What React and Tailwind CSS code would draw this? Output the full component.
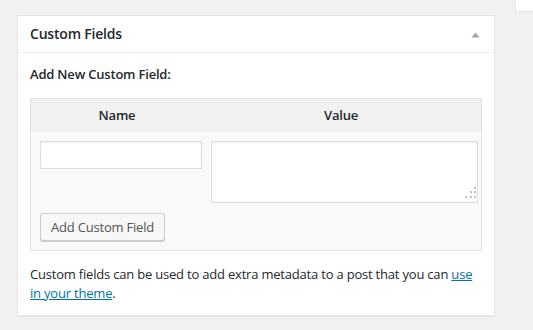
export default function App() {
  const font = { fontFamily: '"Open Sans", "Noto Sans", sans-serif' };
  return (
    <div className="flex h-[330px] w-[533px] items-start overflow-hidden bg-[#f1f1f1] tracking-[-0.2px] text-[#23282d]" style={font}>
      <div className="ml-[17px] mt-[15px] w-[478px] shrink-0 border border-[#e5e5e5] bg-white shadow-[0_1px_1px_rgba(0,0,0,0.04)]">
        <div className="flex h-[37px] items-center justify-between border-b border-[#eee] pl-3 pr-[14px]">
          <h2 className="text-[14px] font-semibold leading-none">Custom Fields</h2>
          <svg width="9" height="6" viewBox="0 0 9 6" className="mt-[1px]">
            <path d="M0.5 5.5 L4.5 0.5 L8.5 5.5 Z" fill="#a0a5aa" />
          </svg>
        </div>

        <div className="px-3 pb-3 pt-3">
          <p className="text-[13px] font-semibold leading-[19px]">Add New Custom Field:</p>

          <div className="mt-[14px] border border-[#e1e1e1] bg-[#f9f9f9]">
            <div className="flex h-[33px] items-center bg-[#f1f1f1] text-[13px] font-semibold">
              <div className="w-[172px] text-center">Name</div>
              <div className="flex-1 pr-[2px] text-center">Value</div>
            </div>
            <div className="px-[9px] pb-[9px] pt-[9px]">
              <div className="flex items-start gap-[9px]">
                <input
                  type="text"
                  className="h-[28px] w-[162px] border border-[#ddd] bg-white px-2 shadow-[inset_0_1px_2px_rgba(0,0,0,0.07)] outline-none"
                />
                <div className="relative">
                  <textarea
                    className="block h-[62px] w-[267px] resize-none border border-[#ddd] bg-white px-2 shadow-[inset_0_1px_2px_rgba(0,0,0,0.07)] outline-none"
                  />
                  <svg width="12" height="12" viewBox="0 0 12 12" className="absolute bottom-[4px] right-[1px]">
                    <g fill="#c3c3c3">
                      <rect x="9" y="0" width="2" height="2" />
                      <rect x="5" y="4" width="2" height="2" />
                      <rect x="9" y="4" width="2" height="2" />
                      <rect x="0" y="9" width="2" height="2" />
                      <rect x="5" y="9" width="2" height="2" />
                      <rect x="9" y="9" width="2" height="2" />
                    </g>
                  </svg>
                </div>
              </div>
              <button
                type="button"
                className="mt-[10px] h-[28px] rounded-[3px] border border-[#ccc] bg-[#f7f7f7] px-[10px] text-[13px] leading-[26px] text-[#555] shadow-[0_1px_0_#ccc]"
              >
                Add Custom Field
              </button>
            </div>
          </div>

          <p className="mt-[14px] text-[13px] leading-[19px]">
            Custom fields can be used to add extra metadata to a post that you can{' '}
            <a href="#" className="text-[#0073aa] underline">use in your theme</a>.
          </p>
        </div>
      </div>

      <div className="ml-[20px] h-[12px] flex-1 border-b border-l border-[#e5e5e5] bg-white" />
    </div>
  );
}
